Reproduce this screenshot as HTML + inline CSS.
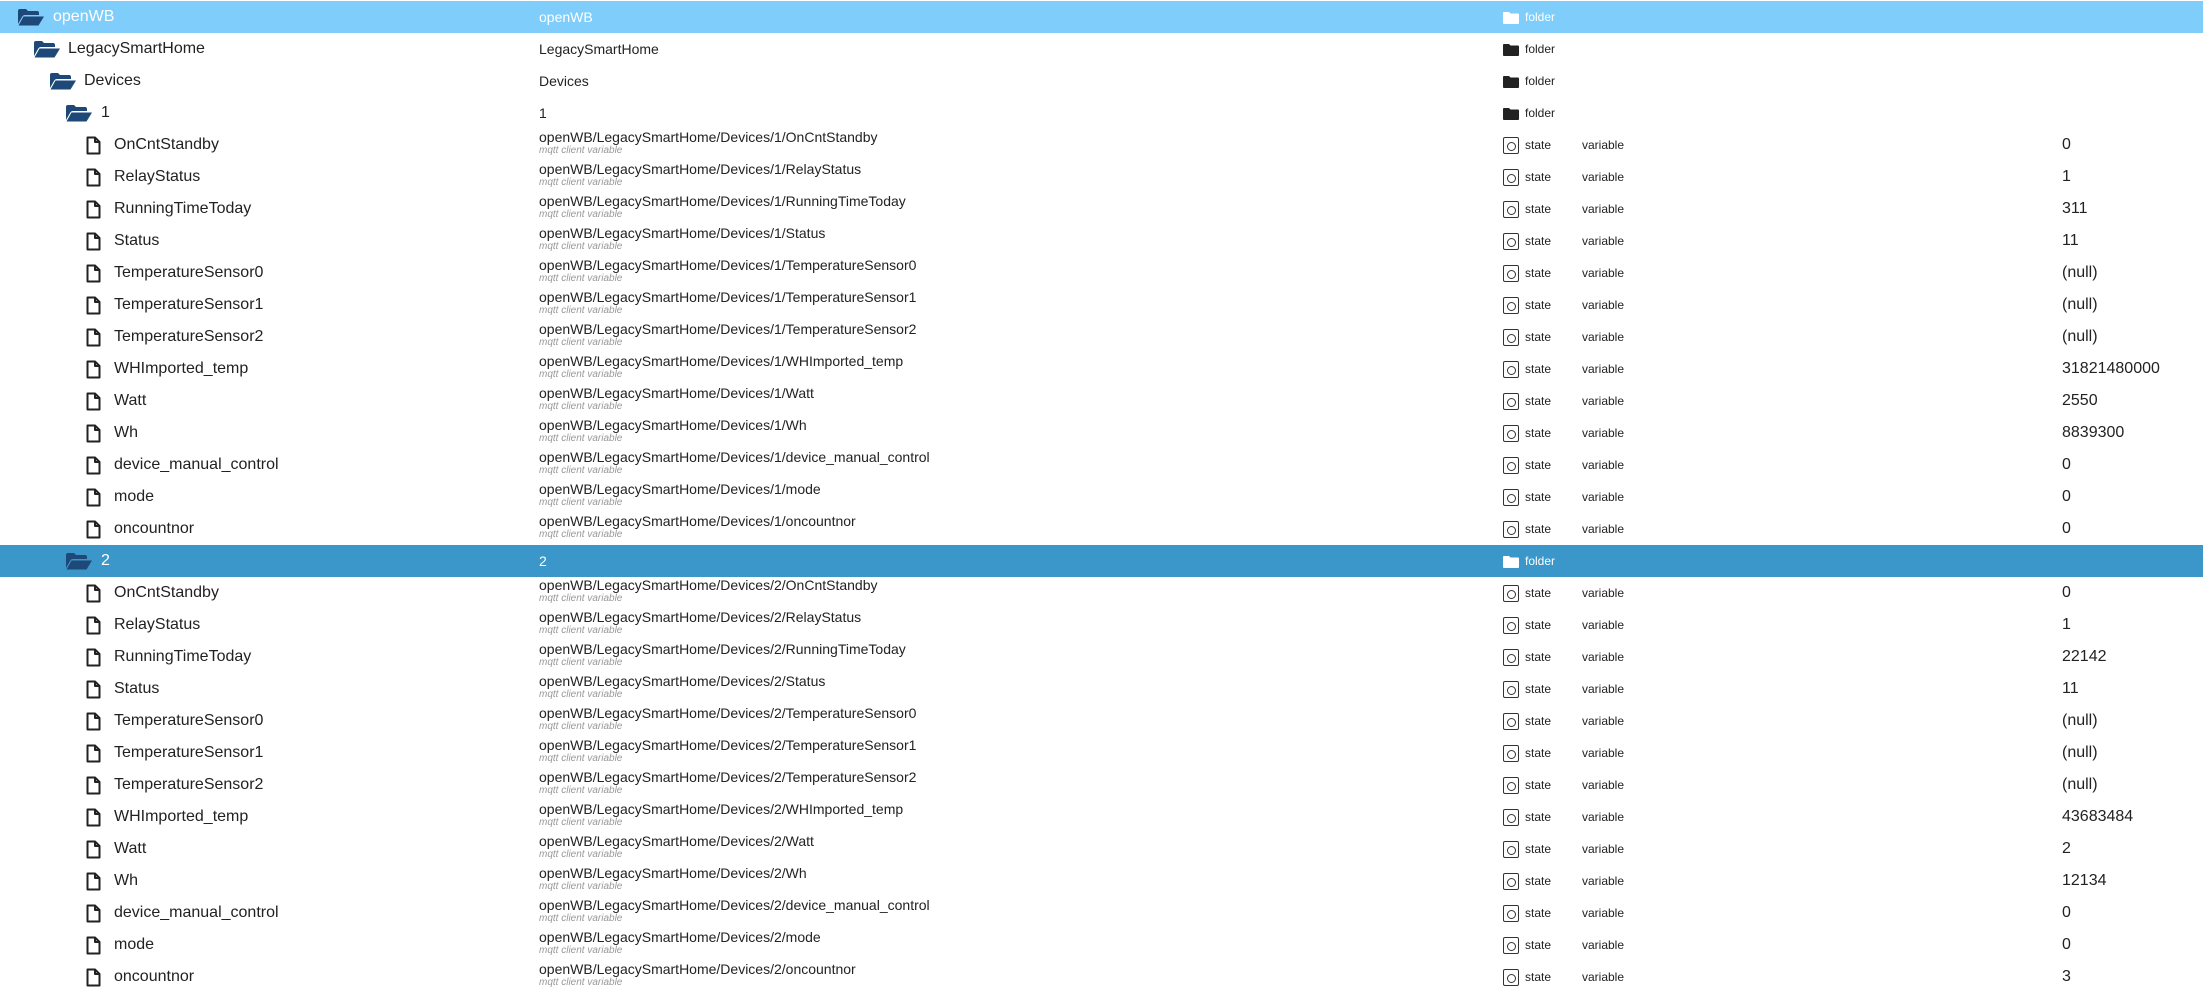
<!DOCTYPE html>
<html><head><meta charset="utf-8"><style>
*{margin:0;padding:0;box-sizing:border-box}
body{width:2203px;height:994px;overflow:hidden;background:#fff;font-family:"Liberation Sans",Arial,sans-serif;color:#222;position:relative}
.r{position:absolute;left:0;width:2203px;height:32px}
.r.h1{background:#7fcdfb;color:#fff}
.r.h2{background:#3b97c9;color:#fff}
.n{position:absolute;top:0;line-height:32px;font-size:16px;white-space:nowrap}
.ic{position:absolute}
.p{position:absolute;left:539px;top:0;white-space:nowrap}
.p b{display:block;font-weight:normal;font-size:14px;line-height:17px}
.p i{display:block;font-size:10px;line-height:10px;color:#999}
.pf{position:absolute;left:539px;top:0;line-height:32px;font-size:14px}
.t{position:absolute;left:1525px;line-height:32px;font-size:12px}
.v{position:absolute;left:1582px;line-height:32px;font-size:12px}
.val{position:absolute;left:2062px;line-height:32px;font-size:16px}
.st{position:absolute;left:1503px;top:8px;width:16px;height:17px;border:1.5px solid #333;border-radius:2px}
.st:after{content:"";position:absolute;left:3px;top:3.5px;width:7px;height:7px;border:1.3px solid #333;border-radius:50%}
.fd{position:absolute;left:1503px;top:11px}
</style></head><body>
<svg width="0" height="0" style="position:absolute"><defs>
<symbol id="fo" viewBox="0 0 26 18"><path d="M0 3Q0 1 2 1H8L10 3H19Q21 3 21 5V7H7Q5 7 4 9L0 16Z"/><path d="M5.5 8.5H26L20.5 17.5H0.5Z"/></symbol>
<symbol id="fi" viewBox="0 0 15 19"><path d="M1.5 1.5H9L13.5 6V17.5H1.5Z M9 1.5V6H13.5" fill="none" stroke="#222" stroke-width="2" stroke-linejoin="round"/></symbol>
<symbol id="fc" viewBox="0 0 16 12"><path d="M0 1Q0 0 1 0H6L7.5 1.5H15Q16 1.5 16 2.5V11Q16 12 15 12H1Q0 12 0 11Z"/></symbol>
</defs></svg>

<div class="r h1" style="top:1px"><svg class="ic" style="left:18px;top:7px" width="26" height="18" fill="#1d4877"><use href="#fo"/></svg><div class="n" style="left:53px">openWB</div><div class="pf">openWB</div><svg class="fd" width="16" height="12" fill="#fff"><use href="#fc"/></svg><div class="t">folder</div></div>
<div class="r" style="top:33px"><svg class="ic" style="left:34px;top:7px" width="26" height="18" fill="#1d4877"><use href="#fo"/></svg><div class="n" style="left:68px">LegacySmartHome</div><div class="pf">LegacySmartHome</div><svg class="fd" width="16" height="12" fill="#222"><use href="#fc"/></svg><div class="t">folder</div></div>
<div class="r" style="top:65px"><svg class="ic" style="left:50px;top:7px" width="26" height="18" fill="#1d4877"><use href="#fo"/></svg><div class="n" style="left:84px">Devices</div><div class="pf">Devices</div><svg class="fd" width="16" height="12" fill="#222"><use href="#fc"/></svg><div class="t">folder</div></div>
<div class="r" style="top:97px"><svg class="ic" style="left:66px;top:7px" width="26" height="18" fill="#1d4877"><use href="#fo"/></svg><div class="n" style="left:101px">1</div><div class="pf">1</div><svg class="fd" width="16" height="12" fill="#222"><use href="#fc"/></svg><div class="t">folder</div></div>

<div class="r" style="top:129px"><svg class="ic" style="left:86px;top:7px" width="15" height="19"><use href="#fi"/></svg><div class="n" style="left:114px">OnCntStandby</div><div class="p"><b>openWB/LegacySmartHome/Devices/1/OnCntStandby</b><i>mqtt client variable</i></div><div class="st"></div><div class="t">state</div><div class="v">variable</div><div class="val">0</div></div>
<div class="r" style="top:161px"><svg class="ic" style="left:86px;top:7px" width="15" height="19"><use href="#fi"/></svg><div class="n" style="left:114px">RelayStatus</div><div class="p"><b>openWB/LegacySmartHome/Devices/1/RelayStatus</b><i>mqtt client variable</i></div><div class="st"></div><div class="t">state</div><div class="v">variable</div><div class="val">1</div></div>
<div class="r" style="top:193px"><svg class="ic" style="left:86px;top:7px" width="15" height="19"><use href="#fi"/></svg><div class="n" style="left:114px">RunningTimeToday</div><div class="p"><b>openWB/LegacySmartHome/Devices/1/RunningTimeToday</b><i>mqtt client variable</i></div><div class="st"></div><div class="t">state</div><div class="v">variable</div><div class="val">311</div></div>
<div class="r" style="top:225px"><svg class="ic" style="left:86px;top:7px" width="15" height="19"><use href="#fi"/></svg><div class="n" style="left:114px">Status</div><div class="p"><b>openWB/LegacySmartHome/Devices/1/Status</b><i>mqtt client variable</i></div><div class="st"></div><div class="t">state</div><div class="v">variable</div><div class="val">11</div></div>
<div class="r" style="top:257px"><svg class="ic" style="left:86px;top:7px" width="15" height="19"><use href="#fi"/></svg><div class="n" style="left:114px">TemperatureSensor0</div><div class="p"><b>openWB/LegacySmartHome/Devices/1/TemperatureSensor0</b><i>mqtt client variable</i></div><div class="st"></div><div class="t">state</div><div class="v">variable</div><div class="val">(null)</div></div>
<div class="r" style="top:289px"><svg class="ic" style="left:86px;top:7px" width="15" height="19"><use href="#fi"/></svg><div class="n" style="left:114px">TemperatureSensor1</div><div class="p"><b>openWB/LegacySmartHome/Devices/1/TemperatureSensor1</b><i>mqtt client variable</i></div><div class="st"></div><div class="t">state</div><div class="v">variable</div><div class="val">(null)</div></div>
<div class="r" style="top:321px"><svg class="ic" style="left:86px;top:7px" width="15" height="19"><use href="#fi"/></svg><div class="n" style="left:114px">TemperatureSensor2</div><div class="p"><b>openWB/LegacySmartHome/Devices/1/TemperatureSensor2</b><i>mqtt client variable</i></div><div class="st"></div><div class="t">state</div><div class="v">variable</div><div class="val">(null)</div></div>
<div class="r" style="top:353px"><svg class="ic" style="left:86px;top:7px" width="15" height="19"><use href="#fi"/></svg><div class="n" style="left:114px">WHImported_temp</div><div class="p"><b>openWB/LegacySmartHome/Devices/1/WHImported_temp</b><i>mqtt client variable</i></div><div class="st"></div><div class="t">state</div><div class="v">variable</div><div class="val">31821480000</div></div>
<div class="r" style="top:385px"><svg class="ic" style="left:86px;top:7px" width="15" height="19"><use href="#fi"/></svg><div class="n" style="left:114px">Watt</div><div class="p"><b>openWB/LegacySmartHome/Devices/1/Watt</b><i>mqtt client variable</i></div><div class="st"></div><div class="t">state</div><div class="v">variable</div><div class="val">2550</div></div>
<div class="r" style="top:417px"><svg class="ic" style="left:86px;top:7px" width="15" height="19"><use href="#fi"/></svg><div class="n" style="left:114px">Wh</div><div class="p"><b>openWB/LegacySmartHome/Devices/1/Wh</b><i>mqtt client variable</i></div><div class="st"></div><div class="t">state</div><div class="v">variable</div><div class="val">8839300</div></div>
<div class="r" style="top:449px"><svg class="ic" style="left:86px;top:7px" width="15" height="19"><use href="#fi"/></svg><div class="n" style="left:114px">device_manual_control</div><div class="p"><b>openWB/LegacySmartHome/Devices/1/device_manual_control</b><i>mqtt client variable</i></div><div class="st"></div><div class="t">state</div><div class="v">variable</div><div class="val">0</div></div>
<div class="r" style="top:481px"><svg class="ic" style="left:86px;top:7px" width="15" height="19"><use href="#fi"/></svg><div class="n" style="left:114px">mode</div><div class="p"><b>openWB/LegacySmartHome/Devices/1/mode</b><i>mqtt client variable</i></div><div class="st"></div><div class="t">state</div><div class="v">variable</div><div class="val">0</div></div>
<div class="r" style="top:513px"><svg class="ic" style="left:86px;top:7px" width="15" height="19"><use href="#fi"/></svg><div class="n" style="left:114px">oncountnor</div><div class="p"><b>openWB/LegacySmartHome/Devices/1/oncountnor</b><i>mqtt client variable</i></div><div class="st"></div><div class="t">state</div><div class="v">variable</div><div class="val">0</div></div>

<div class="r h2" style="top:545px"><svg class="ic" style="left:66px;top:7px" width="26" height="18" fill="#1d4877"><use href="#fo"/></svg><div class="n" style="left:101px">2</div><div class="pf">2</div><svg class="fd" width="16" height="12" fill="#fff"><use href="#fc"/></svg><div class="t">folder</div></div>

<div class="r" style="top:577px"><svg class="ic" style="left:86px;top:7px" width="15" height="19"><use href="#fi"/></svg><div class="n" style="left:114px">OnCntStandby</div><div class="p"><b>openWB/LegacySmartHome/Devices/2/OnCntStandby</b><i>mqtt client variable</i></div><div class="st"></div><div class="t">state</div><div class="v">variable</div><div class="val">0</div></div>
<div class="r" style="top:609px"><svg class="ic" style="left:86px;top:7px" width="15" height="19"><use href="#fi"/></svg><div class="n" style="left:114px">RelayStatus</div><div class="p"><b>openWB/LegacySmartHome/Devices/2/RelayStatus</b><i>mqtt client variable</i></div><div class="st"></div><div class="t">state</div><div class="v">variable</div><div class="val">1</div></div>
<div class="r" style="top:641px"><svg class="ic" style="left:86px;top:7px" width="15" height="19"><use href="#fi"/></svg><div class="n" style="left:114px">RunningTimeToday</div><div class="p"><b>openWB/LegacySmartHome/Devices/2/RunningTimeToday</b><i>mqtt client variable</i></div><div class="st"></div><div class="t">state</div><div class="v">variable</div><div class="val">22142</div></div>
<div class="r" style="top:673px"><svg class="ic" style="left:86px;top:7px" width="15" height="19"><use href="#fi"/></svg><div class="n" style="left:114px">Status</div><div class="p"><b>openWB/LegacySmartHome/Devices/2/Status</b><i>mqtt client variable</i></div><div class="st"></div><div class="t">state</div><div class="v">variable</div><div class="val">11</div></div>
<div class="r" style="top:705px"><svg class="ic" style="left:86px;top:7px" width="15" height="19"><use href="#fi"/></svg><div class="n" style="left:114px">TemperatureSensor0</div><div class="p"><b>openWB/LegacySmartHome/Devices/2/TemperatureSensor0</b><i>mqtt client variable</i></div><div class="st"></div><div class="t">state</div><div class="v">variable</div><div class="val">(null)</div></div>
<div class="r" style="top:737px"><svg class="ic" style="left:86px;top:7px" width="15" height="19"><use href="#fi"/></svg><div class="n" style="left:114px">TemperatureSensor1</div><div class="p"><b>openWB/LegacySmartHome/Devices/2/TemperatureSensor1</b><i>mqtt client variable</i></div><div class="st"></div><div class="t">state</div><div class="v">variable</div><div class="val">(null)</div></div>
<div class="r" style="top:769px"><svg class="ic" style="left:86px;top:7px" width="15" height="19"><use href="#fi"/></svg><div class="n" style="left:114px">TemperatureSensor2</div><div class="p"><b>openWB/LegacySmartHome/Devices/2/TemperatureSensor2</b><i>mqtt client variable</i></div><div class="st"></div><div class="t">state</div><div class="v">variable</div><div class="val">(null)</div></div>
<div class="r" style="top:801px"><svg class="ic" style="left:86px;top:7px" width="15" height="19"><use href="#fi"/></svg><div class="n" style="left:114px">WHImported_temp</div><div class="p"><b>openWB/LegacySmartHome/Devices/2/WHImported_temp</b><i>mqtt client variable</i></div><div class="st"></div><div class="t">state</div><div class="v">variable</div><div class="val">43683484</div></div>
<div class="r" style="top:833px"><svg class="ic" style="left:86px;top:7px" width="15" height="19"><use href="#fi"/></svg><div class="n" style="left:114px">Watt</div><div class="p"><b>openWB/LegacySmartHome/Devices/2/Watt</b><i>mqtt client variable</i></div><div class="st"></div><div class="t">state</div><div class="v">variable</div><div class="val">2</div></div>
<div class="r" style="top:865px"><svg class="ic" style="left:86px;top:7px" width="15" height="19"><use href="#fi"/></svg><div class="n" style="left:114px">Wh</div><div class="p"><b>openWB/LegacySmartHome/Devices/2/Wh</b><i>mqtt client variable</i></div><div class="st"></div><div class="t">state</div><div class="v">variable</div><div class="val">12134</div></div>
<div class="r" style="top:897px"><svg class="ic" style="left:86px;top:7px" width="15" height="19"><use href="#fi"/></svg><div class="n" style="left:114px">device_manual_control</div><div class="p"><b>openWB/LegacySmartHome/Devices/2/device_manual_control</b><i>mqtt client variable</i></div><div class="st"></div><div class="t">state</div><div class="v">variable</div><div class="val">0</div></div>
<div class="r" style="top:929px"><svg class="ic" style="left:86px;top:7px" width="15" height="19"><use href="#fi"/></svg><div class="n" style="left:114px">mode</div><div class="p"><b>openWB/LegacySmartHome/Devices/2/mode</b><i>mqtt client variable</i></div><div class="st"></div><div class="t">state</div><div class="v">variable</div><div class="val">0</div></div>
<div class="r" style="top:961px"><svg class="ic" style="left:86px;top:7px" width="15" height="19"><use href="#fi"/></svg><div class="n" style="left:114px">oncountnor</div><div class="p"><b>openWB/LegacySmartHome/Devices/2/oncountnor</b><i>mqtt client variable</i></div><div class="st"></div><div class="t">state</div><div class="v">variable</div><div class="val">3</div></div>
</body></html>
